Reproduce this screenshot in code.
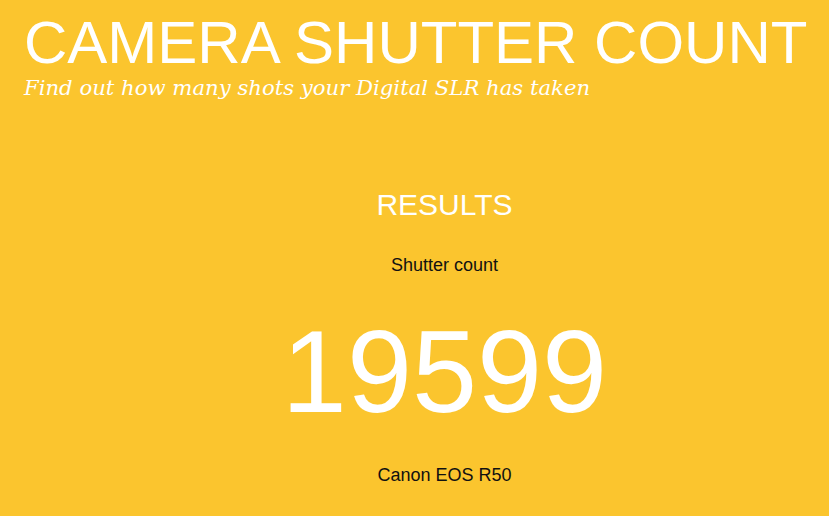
export default function App() {
  return (
    <div className="min-h-[516px] w-full bg-[#fbc52e] text-white" style={{ fontFamily: '"Liberation Sans", Arial, sans-serif' }}>
      {/* Header */}
      <header className="pl-[24px] pt-[13px]">
        <h1 className="text-[60px] leading-[60px] font-normal">CAMERA SHUTTER COUNT</h1>
        <p className="mt-[1px] text-[21.2px] leading-[28px] italic" style={{ fontFamily: '"DejaVu Serif", Georgia, serif' }}>
          Find out how many shots your Digital SLR has taken
        </p>
      </header>

      {/* Results */}
      <section className="pl-[60px] pt-[88px] text-center">
        <h2 className="text-[30px] leading-[30px]">RESULTS</h2>
        <p className="mt-[35px] text-[18px] leading-[20px] text-[#111]">Shutter count</p>
        <div className="mt-[38px] text-[117px] leading-[117px]">19599</div>
        <p className="mt-[35px] text-[18px] leading-[20px] text-[#111]">Canon EOS R50</p>
      </section>
    </div>
  )
}
